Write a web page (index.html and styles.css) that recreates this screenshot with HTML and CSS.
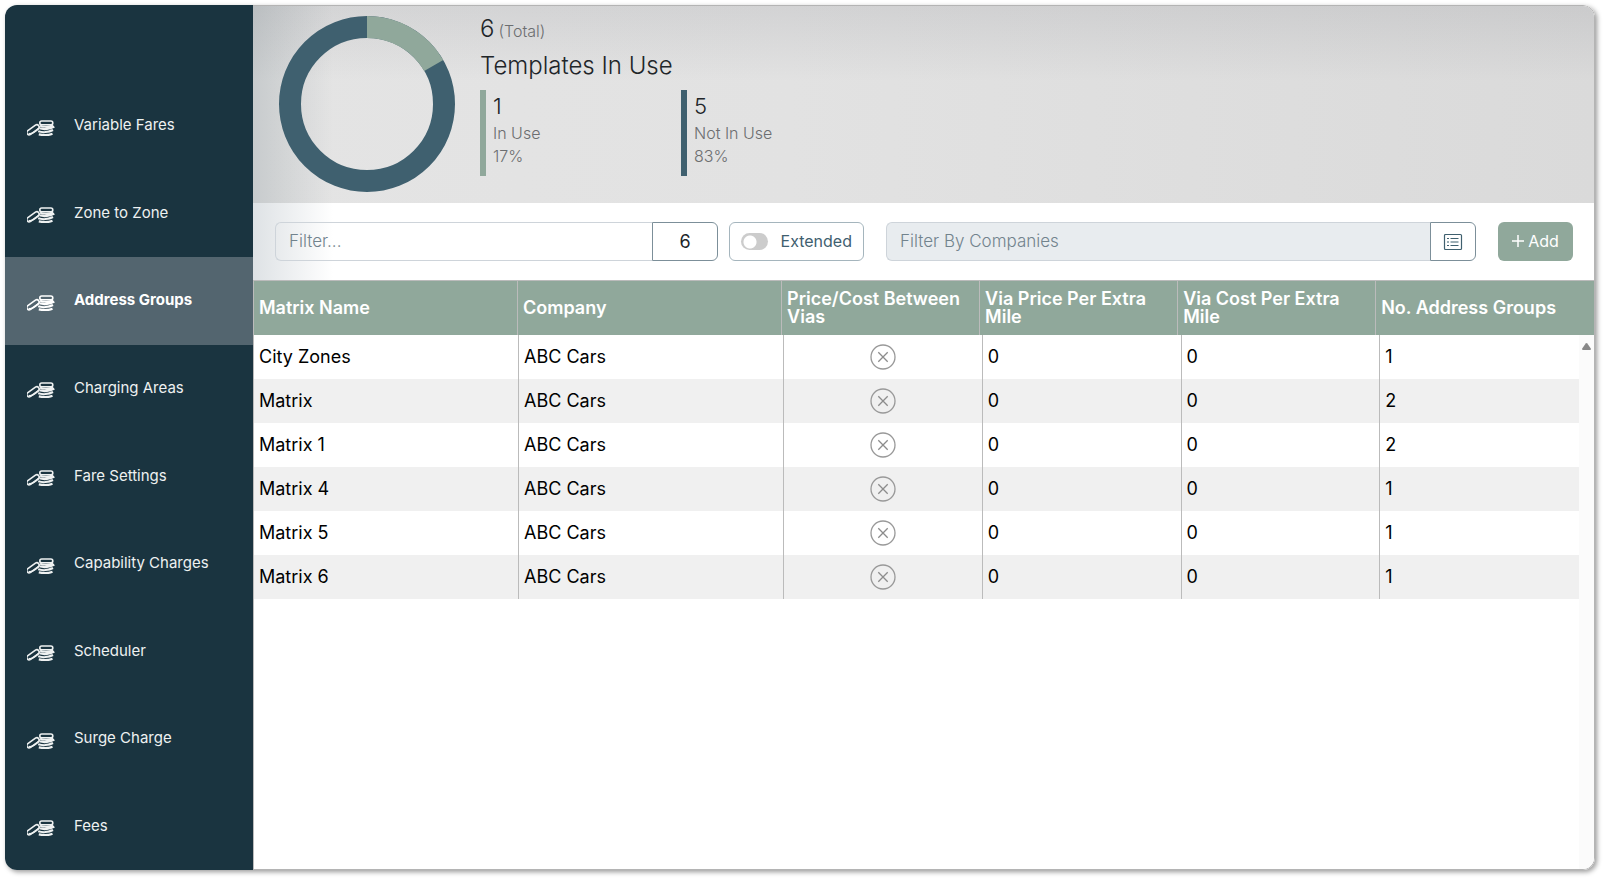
FILE: index.html
```
<!DOCTYPE html>
<html lang="en">
<head>
    <meta charset="UTF-8">
    <meta name="viewport" content="width=device-width, initial-scale=1.0">
    <title>Address Groups</title>
    <link rel="stylesheet" href="styles.css">
</head>
<body>

    <svg class="sprite" aria-hidden="true">
        <symbol id="coins" viewBox="0 0 28 16">
            <g fill="none" stroke="currentColor">
                <rect x="-1" y="7.500" width="14" height="4.600" rx="2.300" stroke-width="1.600" transform="rotate(-36 6 9.800)"/>
                <path d="M1.600 13.600c2.500 1 5.500-1 10-5" stroke-width="1.600"/>
                <rect x="12.800" y="1" width="13" height="3.800" rx="1.900" stroke-width="1.600"/>
                <path d="M13 5.600c2.500 1.600 10 1.600 13-.4M12.500 8.300c4 1.300 11 .9 14.800-1.600M11.200 11.300c4 1.300 10.500 1 14.800-1.300M11.800 14.400c4 .9 10 .9 13.700-.6" stroke-width="2.200"/>
            </g>
        </symbol>
        <symbol id="cross" viewBox="0 0 26 26">
            <circle cx="13" cy="13" r="12" fill="none" stroke="#999" stroke-width="1.300"/>
            <path d="M8.300 8.300l9.400 9.400M17.700 8.300l-9.400 9.400" stroke="#8c8c8c" stroke-width="1.300"/>
        </symbol>
    </svg>

    <div class="window">
        <nav class="sidebar">
            <a href="#" class="nav-item"><svg class="nav-icon"><use href="#coins"/></svg>Variable Fares</a>
            <a href="#" class="nav-item"><svg class="nav-icon"><use href="#coins"/></svg>Zone to Zone</a>
            <a href="#" class="nav-item active"><svg class="nav-icon"><use href="#coins"/></svg>Address Groups</a>
            <a href="#" class="nav-item"><svg class="nav-icon"><use href="#coins"/></svg>Charging Areas</a>
            <a href="#" class="nav-item"><svg class="nav-icon"><use href="#coins"/></svg>Fare Settings</a>
            <a href="#" class="nav-item"><svg class="nav-icon"><use href="#coins"/></svg>Capability Charges</a>
            <a href="#" class="nav-item"><svg class="nav-icon"><use href="#coins"/></svg>Scheduler</a>
            <a href="#" class="nav-item"><svg class="nav-icon"><use href="#coins"/></svg>Surge Charge</a>
            <a href="#" class="nav-item"><svg class="nav-icon"><use href="#coins"/></svg>Fees</a>
        </nav>

        <main class="content">
            <section class="summary">
                <svg class="donut" viewBox="0 0 176 176">
                    <circle cx="88" cy="88" r="77" fill="none" stroke="#3f606f" stroke-width="22"/>
                    <circle cx="88" cy="88" r="77" fill="none" stroke="#90a89b" stroke-width="22" pathLength="6" stroke-dasharray="1 5" transform="rotate(-90 88 88)"/>
                </svg>
                <div class="summary-text">
                    <div class="total">6<span class="muted">(Total)</span></div>
                    <h1 class="title">Templates In Use</h1>
                    <div class="stats">
                        <div class="stat used">
                            <div class="stat-value">1</div>
                            <div class="muted">In Use</div>
                            <div class="muted">17%</div>
                        </div>
                        <div class="stat unused">
                            <div class="stat-value">5</div>
                            <div class="muted">Not In Use</div>
                            <div class="muted">83%</div>
                        </div>
                    </div>
                </div>
            </section>

            <div class="toolbar">
                <div class="group filter">
                    <input type="text" class="field" placeholder="Filter..." aria-label="Filter">
                    <span class="count">6</span>
                </div>
                <label class="switch">
                    <input type="checkbox" class="switch-input">
                    Extended
                </label>
                <div class="group companies">
                    <input type="text" class="field" placeholder="Filter By Companies" aria-label="Filter By Companies" readonly>
                    <button type="button" class="list-btn" aria-label="Choose companies">
                        <svg width="20" height="18" viewBox="0 0 20 18" fill="none" stroke="#3f606f">
                            <rect x="1.500" y="1.500" width="17" height="15" rx="1" stroke-width="1.200"/>
                            <path d="M4 5.500h2M4 9h2M4 12.500h2M7.500 5.500h8M7.500 9h8M7.500 12.500h8" stroke-width="1.200"/>
                        </svg>
                    </button>
                </div>
                <button type="button" class="add-btn">
                    <svg width="12" height="12" viewBox="0 0 12 12" stroke="#fff" stroke-width="1.500"><path d="M6 0v12M0 6h12"/></svg>
                    Add
                </button>
            </div>

            <div class="table-wrap">
                <table class="matrix">
                    <thead>
                        <tr>
                            <th>Matrix Name</th>
                            <th>Company</th>
                            <th>Price/Cost Between Vias</th>
                            <th>Via Price Per Extra Mile</th>
                            <th>Via Cost Per Extra Mile</th>
                            <th>No. Address Groups</th>
                        </tr>
                    </thead>
                    <tbody>
                        <tr><td>City Zones</td><td>ABC Cars</td><td class="mark"><svg><use href="#cross"/></svg></td><td>0</td><td>0</td><td>1</td></tr>
                        <tr><td>Matrix</td><td>ABC Cars</td><td class="mark"><svg><use href="#cross"/></svg></td><td>0</td><td>0</td><td>2</td></tr>
                        <tr><td>Matrix 1</td><td>ABC Cars</td><td class="mark"><svg><use href="#cross"/></svg></td><td>0</td><td>0</td><td>2</td></tr>
                        <tr><td>Matrix 4</td><td>ABC Cars</td><td class="mark"><svg><use href="#cross"/></svg></td><td>0</td><td>0</td><td>1</td></tr>
                        <tr><td>Matrix 5</td><td>ABC Cars</td><td class="mark"><svg><use href="#cross"/></svg></td><td>0</td><td>0</td><td>1</td></tr>
                        <tr><td>Matrix 6</td><td>ABC Cars</td><td class="mark"><svg><use href="#cross"/></svg></td><td>0</td><td>0</td><td>1</td></tr>
                    </tbody>
                </table>
                <div class="scrollbar">
                    <svg width="9" height="7" viewBox="0 0 9 7" fill="#888"><path d="M3.700 .5q.8-.9 1.600 0l3.500 5q.5 1.500-.8 1.500h-7q-1.300 0-.8-1.500z"/></svg>
                </div>
            </div>
        </main>
    </div>

</body>
</html>
```
FILE: styles.css
```
* {
    margin: 0;
    padding: 0;
    box-sizing: border-box;
}

body {
    height: 100vh;
    padding: 5px 10px 9px 5px;
    background: #fff;
    color: #212529;
    font-family: Inter, 'Liberation Sans', sans-serif;
    font-size: 16px;
}

input, button {
    font: inherit;
}

.sprite {
    display: none;
}

.window {
    display: flex;
    height: 100%;
    border-radius: 12px;
    overflow: hidden;
    box-shadow: 2px 2px 5px rgba(0, 0, 0, 0.4);
}

/* Sidebar */
.sidebar {
    display: flex;
    flex-direction: column;
    flex: 0 0 248px;
    padding-top: 77px;
    background: #1a3440;
}

.nav-item {
    display: flex;
    flex: 1;
    align-items: center;
    gap: 19px;
    padding: 0 0 2px 22px;
    color: #eef1f1;
    font-size: 15px;
    text-decoration: none;
}

.nav-item.active {
    background: #53656f;
    color: #fff;
    font-weight: 700;
}

.nav-icon {
    width: 28px;
    height: 16px;
    margin-top: 6px;
}

/* Content */
.content {
    display: flex;
    flex-direction: column;
    flex: 1;
    min-width: 0;
    border: 1px solid #b4b4b4;
    border-left: 0;
    border-radius: 0 12px 12px 0;
    overflow: hidden;
    background: #fff;
}

.summary {
    display: flex;
    gap: 25px;
    padding: 10px 26px;
    height: 197px;
    background:
        linear-gradient(to right, rgba(26, 52, 64, 0.14), rgba(26, 52, 64, 0) 80px),
        linear-gradient(to bottom, rgba(26, 30, 44, 0.08), rgba(26, 30, 44, 0) 76px),
        linear-gradient(to right, #e4e4e4, #e2e2e2 40%, #dadada);
}

.donut {
    width: 176px;
    height: 176px;
}

.total {
    display: flex;
    align-items: baseline;
    gap: 4px;
    font-size: 24px;
    font-weight: 300;
    line-height: 26px;
}

.muted {
    color: #6c6e70;
    font-size: 16px;
    font-weight: 300;
    line-height: 23px;
}

.title {
    margin: 6px 0 7px;
    font-size: 24px;
    font-weight: 300;
    line-height: 34px;
}

.stats {
    display: flex;
}

.stat {
    width: 201px;
    height: 86px;
    padding-left: 7px;
    border-left: 6px solid #90a89b;
}

.stat.unused {
    border-color: #3f606f;
}

.stat-value {
    font-size: 22px;
    font-weight: 300;
    line-height: 32px;
}

.toolbar {
    display: flex;
    height: 77px;
    padding: 19px 21px 19px 22px;
    background: linear-gradient(to right, #dee2e5, #fff 80px);
}

.group {
    display: flex;
}

.filter {
    flex: 443 1 0;
}

.companies {
    flex: 590 1 0;
    margin: 0 22px;
}

.field {
    flex: 1;
    min-width: 0;
    padding: 0 13px 2px;
    border: 1px solid #ced4da;
    border-right: 0;
    border-radius: 6px 0 0 6px;
    background: transparent;
    color: #212529;
    font-size: 17px;
    font-weight: 300;
}

.field::placeholder {
    color: #72838d;
}

.companies .field {
    background: #e8ecef;
}

.count {
    display: flex;
    align-items: center;
    justify-content: center;
    width: 66px;
    border: 1px solid #7c8f99;
    border-radius: 0 6px 6px 0;
    font-size: 18px;
}

.switch {
    display: flex;
    align-items: center;
    justify-content: space-between;
    width: 135px;
    margin-left: 11px;
    padding: 0 11px 1px;
    border: 1px solid #a5b5bd;
    border-radius: 6px;
    color: #3f606f;
    font-size: 16px;
}

.switch-input {
    appearance: none;
    width: 27px;
    height: 17px;
    border-radius: 9px;
    background: radial-gradient(circle at 9px 9px, #fff 6px, #ccc 7px);
}

.switch-input:checked {
    background: radial-gradient(circle at 18px 9px, #fff 6px, #90a89b 7px);
}

.list-btn {
    display: flex;
    align-items: center;
    justify-content: center;
    width: 46px;
    border: 1px solid #7c8f99;
    border-radius: 0 6px 6px 0;
    background: #fff;
}

.add-btn {
    display: flex;
    align-items: center;
    justify-content: center;
    gap: 4px;
    width: 75px;
    padding-bottom: 2px;
    border: 0;
    border-radius: 6px;
    background: #90a89b;
    color: #fff;
    font-size: 16px;
}

/* Table */
.table-wrap {
    display: grid;
    grid-template-columns: 1fr 15px;
    grid-template-rows: 54px 1fr;
    flex: 1;
    border-top: 1px solid #bbb;
    border-left: 1px solid #bbb;
}

.matrix {
    grid-area: 1 / 1 / 3 / 3;
}

.scrollbar {
    grid-area: 2 / 2;
    padding: 8px 3px;
    background: #fbfbfb;
    line-height: 0;
}

.matrix,
.matrix thead,
.matrix tbody {
    display: block;
}

.matrix tr {
    display: grid;
}

.matrix thead tr {
    grid-template-columns: 4fr 4fr 3fr 3fr 3fr 3.3fr;
    height: 54px;
    background: #90a89b;
}

.matrix th {
    display: flex;
    align-items: center;
    padding: 0 5px;
    color: #fff;
    font-size: 18px;
    font-weight: 600;
    line-height: 18px;
    text-align: left;
}

.matrix tbody {
    margin-right: 15px;
}

.matrix tbody tr {
    grid-template-columns: 4fr 4fr 3fr 3fr 3fr 3fr;
    height: 44px;
}

.matrix tbody tr:nth-child(even) {
    background: #f0f0f0;
}

.matrix td {
    display: flex;
    align-items: center;
    padding: 0 5px 2px;
    color: #000;
    font-size: 18px;
}

.matrix th:not(:last-child),
.matrix td:not(:last-child) {
    border-right: 1px solid #bbb;
}

.matrix .mark {
    justify-content: center;
    padding-bottom: 0;
}

.mark svg {
    width: 26px;
    height: 26px;
}
```
